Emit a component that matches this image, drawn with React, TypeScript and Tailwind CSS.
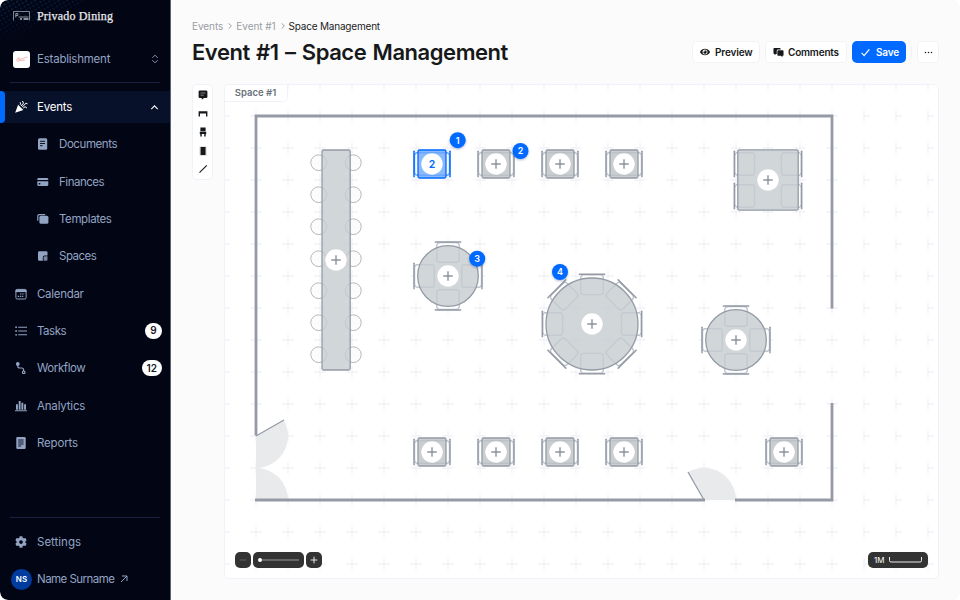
import React from 'react';
import { MdCelebration } from 'react-icons/md';
import { FaCog, FaEye } from 'react-icons/fa';

interface IconProps {
  children: React.ReactNode;
  className?: string;
}

// 12x12 drawing area shared by all the small glyphs
const Icon: React.FC<IconProps> = ({ children, className = 'size-3' }) => (
  <svg viewBox="0 0 12 12" className={`shrink-0 ${className}`} fill="currentColor">
    {children}
  </svg>
);

const DocumentIcon = () => (
  <Icon>
    <rect x="1" y="0.3" width="9.2" height="11.4" rx="1.5" />
    <path d="M3 3.3h5M3 5.5h5M3 7.7h2.6" stroke="#020514" strokeWidth="0.9" />
  </Icon>
);

const CardIcon = () => (
  <Icon>
    <path d="M1.6 2h8.4a1.3 1.3 0 0 1 1.3 1.3v.6H.3v-.6A1.3 1.3 0 0 1 1.6 2z" />
    <path d="M.3 5.2h11v3.5A1.3 1.3 0 0 1 10 10H1.6A1.3 1.3 0 0 1 .3 8.7z" />
    <rect x="1.7" y="7" width="1.6" height="1.5" fill="#020514" />
  </Icon>
);

const TemplatesIcon = () => (
  <Icon>
    <path d="M.8 7.8V3a1.4 1.4 0 0 1 1.4-1.4h6" fill="none" stroke="currentColor" strokeWidth="1.2" />
    <rect x="2.4" y="2.8" width="9" height="7.9" rx="1.5" />
  </Icon>
);

const SpacesIcon = () => (
  <Icon>
    <path d="M2.3 1.3h7a1.2 1.2 0 0 1 1.2 1.2v3H7.6A1.8 1.8 0 0 0 5.8 7.3v3.5H2.3a1.3 1.3 0 0 1-1.3-1.3V2.6a1.3 1.3 0 0 1 1.3-1.3z" />
    <path d="M6.6 10.7V7.3a1 1 0 0 1 1-1h2.9v3.2a1.2 1.2 0 0 1-1.2 1.2z" opacity="0.8" />
  </Icon>
);

const CalendarIcon = () => (
  <Icon>
    <rect x="0.9" y="1.4" width="10.2" height="9.6" rx="1.3" fill="none" stroke="currentColor" strokeWidth="1" />
    <path d="M.6 1.7h10.8v2.4H.6z" />
    <path d="M5 6h4.6M2.7 8.3h5.6" stroke="currentColor" strokeWidth="1.2" strokeDasharray="1.4 .8" />
  </Icon>
);

const TasksIcon = () => (
  <Icon>
    <path d="M3.2 2.2h8.8M3.2 6h8.8M3.2 9.8h8.8" stroke="currentColor" strokeWidth="1.1" />
    <circle cx="1.1" cy="2.2" r="0.9" />
    <circle cx="1.1" cy="6" r="0.9" />
    <circle cx="1.1" cy="9.8" r="0.9" />
  </Icon>
);

const WorkflowIcon = () => (
  <Icon>
    <circle cx="2.8" cy="1.9" r="1.9" />
    <path d="M2.8 3v1.2a1.8 1.8 0 0 0 1.8 1.8h2a2 2 0 0 1 2 2v1" fill="none" stroke="currentColor" strokeWidth="1.2" />
    <circle cx="8.7" cy="10.3" r="1.3" fill="none" stroke="currentColor" strokeWidth="1.2" />
  </Icon>
);

const AnalyticsIcon = () => (
  <Icon>
    <path d="M1 4.3h1.9v5.5H1zM3.7 1h1.9v8.8H3.7zM6.4 2.8h1.9v7H6.4zM9.1 4.3H11v5.5H9.1zM0 10.3h12v1H0z" />
  </Icon>
);

const ReportsIcon = () => (
  <Icon>
    <rect x="1.3" y="0" width="9.4" height="12" rx="1.3" />
    <path d="M3.2 3h5.4M3.2 5h5.4M3.2 7h5.4M3.2 9h3" stroke="#020514" strokeWidth="0.9" />
  </Icon>
);

interface NavItem {
  label: string;
  icon: React.ReactNode;
  labelClass: string;
  nested?: boolean;
  badge?: string;
}

const navItems: NavItem[] = [
  { label: 'Documents', icon: <DocumentIcon />, labelClass: 'tracking-[-0.42px]', nested: true },
  { label: 'Finances', icon: <CardIcon />, labelClass: 'tracking-[-0.47px]', nested: true },
  { label: 'Templates', icon: <TemplatesIcon />, labelClass: 'tracking-[-0.4px]', nested: true },
  { label: 'Spaces', icon: <SpacesIcon />, labelClass: 'tracking-[-0.5px]', nested: true },
  { label: 'Calendar', icon: <CalendarIcon />, labelClass: 'tracking-[-0.3px]' },
  { label: 'Tasks', icon: <TasksIcon />, labelClass: 'tracking-[-0.48px]', badge: '9' },
  { label: 'Workflow', icon: <WorkflowIcon />, labelClass: 'tracking-[-0.41px]', badge: '12' },
  { label: 'Analytics', icon: <AnalyticsIcon />, labelClass: 'tracking-[-0.18px]' },
  { label: 'Reports', icon: <ReportsIcon />, labelClass: 'tracking-[-0.16px]' },
];

const NavRow: React.FC<{ item: NavItem }> = ({ item }) => (
  <div className={`flex h-8 items-center pr-2 ${item.nested ? 'pl-[37px]' : 'pl-[15px]'}`}>
    {item.icon}
    <span className={`ml-[10px] flex-1 pt-px ${item.labelClass}`}>{item.label}</span>
    {item.badge && (
      <span className="flex h-4 min-w-[17px] items-center justify-center rounded-full bg-white px-[5px] text-[10px] font-semibold text-[#15171f]">
        {item.badge}
      </span>
    )}
  </div>
);

const Sidebar = () => (
  <aside className="relative flex h-full w-[171px] shrink-0 flex-col overflow-hidden rounded-l-lg border-r border-[#5d6270] bg-[#020514] text-[11.5px] text-[#93a4c3]">
    <svg className="absolute top-0 left-0 h-12 w-24" viewBox="0 0 96 48">
      <defs>
        <pattern id="dots" width="4" height="4" patternUnits="userSpaceOnUse" patternTransform="rotate(-30)">
          <circle cx="2" cy="2" r="0.8" fill="#0b63a8" />
        </pattern>
        <linearGradient id="fade" x1="0" y1="0" x2="0.5" y2="1">
          <stop offset="0" stopColor="#fff" stopOpacity="0.8" />
          <stop offset="0.8" stopColor="#fff" stopOpacity="0" />
        </linearGradient>
        <mask id="dotMask">
          <path d="M0 0h86L0 46z" fill="url(#fade)" />
        </mask>
      </defs>
      <rect width="96" height="48" fill="url(#dots)" mask="url(#dotMask)" />
    </svg>
    <div className="relative flex h-8 items-center pl-[13px]">
      <svg viewBox="0 0 17 10" className="h-[10px] w-[17px] fill-none stroke-[#b5b8bf]">
        <path d="M.5 9.5V.5h16v9" strokeWidth="0.7" />
        <path d="M2.8 2.5v4M2.8 2.5h2v2h-2M5.5 6h10" strokeWidth="0.8" />
        <path d="M7 8h2M10.5 8h5" strokeWidth="1.3" />
      </svg>
      <span className="ml-[7px] font-['Liberation_Serif',serif] text-[12px] tracking-[0.18px] text-[#e9eaee] [-webkit-text-stroke:0.25px_#e9eaee]">
        Privado Dining
      </span>
    </div>
    <div className="mt-[11px] flex h-8 items-center pr-[10px] pl-[13px]">
      <span className="flex size-[17px] items-center justify-center rounded-[3px] bg-white">
        <svg viewBox="0 0 14 8" className="h-2 w-[14px] fill-none stroke-[#ef8d8d]" strokeWidth="0.6">
          <path d="M1 5.5c2-1 2-3 3-3s-1 3 0 2.5 1-1 2-1 1 0 2-.5 2-1 4.500-1.500M2 6.500c3-1 5-1.300 8-1.500" />
        </svg>
      </span>
      <span className="ml-[7px] flex-1 pt-px tracking-[-0.22px]">Establishment</span>
      <Icon className="size-[10px]">
        <path d="M2.800 4.600 6 1.400l3.200 3.200M2.800 7.400 6 10.600l3.200-3.200" fill="none" stroke="currentColor" strokeWidth="1.100" />
      </Icon>
    </div>
    <div className="mx-[10px] mt-[7px] h-px bg-[#1a2140]" />
    <nav className="mt-2 flex flex-col gap-[5.33px]">
      <div className="flex h-8 items-center bg-[#071129] pr-[10px] text-white">
        <span className="h-8 w-[5px] rounded-r-[4px] bg-[#0069ff]" />
        <MdCelebration className="ml-[9px] size-[14px]" />
        <span className="ml-[9px] flex-1 pt-px tracking-[-0.23px]">Events</span>
        <Icon className="size-[11px]">
          <path d="M2.500 7.700 6 4.200l3.500 3.500" fill="none" stroke="currentColor" strokeWidth="1.200" />
        </Icon>
      </div>
      {navItems.map((item) => (
        <NavRow key={item.label} item={item} />
      ))}
    </nav>
    <div className="mx-[10px] mt-auto h-px bg-[#1a2140]" />
    <div className="mt-2 flex h-8 items-center pl-[15px]">
      <FaCog className="size-3" />
      <span className="ml-[10px] pt-px">Settings</span>
    </div>
    <div className="mt-[5px] mb-[5px] flex h-8 items-center pl-[11px]">
      <span className="flex size-[21px] items-center justify-center rounded-full bg-[#003c9e] text-[8px] font-semibold text-white">NS</span>
      <span className="ml-[5px] pt-px tracking-[-0.53px]">Name Surname</span>
      <Icon className="ml-[3px] size-3">
        <path d="M3 9 9 3M4 3h5v5" fill="none" stroke="currentColor" strokeWidth="1" />
      </Icon>
    </div>
  </aside>
);

const Crumb = () => (
  <Icon className="mr-[2px] ml-[3px] size-2 text-[#8d929b]">
    <path d="M4 2l4 4-4 4" fill="none" stroke="currentColor" strokeWidth="1.3" />
  </Icon>
);

const Header = () => (
  <header className="flex justify-between">
    <div>
      <div className="flex h-3 items-center text-[10px] text-[#999da5]">
        <span className="tracking-[-0.05px]">Events</span>
        <Crumb />
        <span className="tracking-[-0.05px]">Event #1</span>
        <Crumb />
        <span className="tracking-[-0.2px] text-[#1b1c1f]">Space Management</span>
      </div>
      <h1 className="mt-[6px] mb-px text-[22px] leading-7 font-semibold tracking-[-0.45px] [word-spacing:1.2px] whitespace-nowrap text-[#17181a]">
        Event #1 – Space Management
      </h1>
    </div>
    <div className="mt-[21px] flex h-[22px] text-[10px] font-semibold text-[#17181a]">
      <button className="flex w-[68px] items-center rounded-[5px] border border-[#f1f2f6] bg-white pl-[7px]">
        <FaEye className="size-[10px]" />
        <span className="ml-[5px] tracking-[-0.15px]">Preview</span>
      </button>
      <button className="ml-[5px] flex w-[82px] items-center rounded-[5px] border border-[#f1f2f6] bg-white pl-[7px]">
        <Icon className="size-[11px]">
          <path d="M1.500 1h5.800a1 1 0 0 1 1 1v.8H5.500a1.400 1.400 0 0 0-1.400 1.400v3.300H3.200L1.800 9V7.500h-.3a1 1 0 0 1-1-1V2a1 1 0 0 1 1-1z" />
          <path d="M5.800 3.600h4.700a1 1 0 0 1 1 1v4a1 1 0 0 1-1 1h-.3v1.600L8.700 9.600H5.800a1 1 0 0 1-1-1v-4a1 1 0 0 1 1-1z" />
        </Icon>
        <span className="ml-1 tracking-[-0.2px]">Comments</span>
      </button>
      <button className="ml-[5px] flex w-[54px] items-center rounded-[5px] bg-[#0069ff] pl-2 text-white">
        <Icon className="size-[11px]">
          <path d="M1.800 6.500 4.500 9.500 10.200 2.500" fill="none" stroke="currentColor" strokeWidth="1.300" />
        </Icon>
        <span className="ml-[5px] tracking-[-0.15px]">Save</span>
      </button>
      <span className="mx-[5px] my-[5px] w-px bg-[#f1f2f6]" />
      <button className="flex w-[22px] items-center justify-center rounded-[5px] border border-[#f1f2f6] bg-white">
        <Icon className="size-[9px]">
          <circle cx="2" cy="6" r="1" />
          <circle cx="6" cy="6" r="1" />
          <circle cx="10" cy="6" r="1" />
        </Icon>
      </button>
    </div>
  </header>
);

const Toolbar = () => (
  <div className="flex h-[96px] w-[21px] flex-col items-center justify-between rounded-[5px] border border-[#f1f2f9] bg-white py-[4px] text-[#17181a]">
    <Icon>
      <path d="M2.800 1.600h6.400A1.200 1.200 0 0 1 10.400 2.800v5a1.200 1.200 0 0 1-1.200 1.200H7L4.800 10.800V9h-2A1.200 1.200 0 0 1 1.600 7.800v-5a1.200 1.200 0 0 1 1.200-1.200z" />
      <path d="M3.500 4h5M3.500 6.200h3.300" stroke="#aaa" strokeWidth="0.700" />
    </Icon>
    <Icon>
      <path d="M1.600 3.300h8.800v5.300H9V5.600H3v3H1.600z" />
    </Icon>
    <Icon>
      <path d="M3.400 1.500h5.200v3.800H3.400zM2.800 5.800h6.400v2.200H2.800zM3.300 8h1.500v2.500H3.300zM7.200 8h1.500v2.500H7.200z" />
    </Icon>
    <Icon>
      <path d="M2.800 1.800h6.400v8.400H2.800z" opacity="0.500" />
      <path d="M4 2h4.200v8H4z" />
    </Icon>
    <Icon>
      <path d="M2.500 9.700 9.800 2.300" stroke="currentColor" strokeWidth="1.100" />
    </Icon>
  </div>
);

const GREY = '#949ba6';
const BLUE = '#0069ff';

// Grid marks every 32 units, the last three columns have no left arm
const gridPath = Array.from({ length: 23 }, (_, col) => 224 + col * 32)
  .flatMap((x) =>
    Array.from({ length: 16 }, (_, row) => 84 + row * 32).map(
      (y) => `M${x >= 864 ? x : x - 5.5} ${y}H${x + 5.5}M${x} ${y - 5.5}V${y + 5.5}`
    )
  )
  .join('');

interface ChairProps {
  cx: number;
  cy: number;
  distance: number;
  angle: number;
  color?: string;
}

const Chair: React.FC<ChairProps> = ({ cx, cy, distance, angle, color = GREY }) => (
  <g transform={`translate(${cx} ${cy}) rotate(${angle}) translate(${-distance} 0)`} fill="none" stroke={color}>
    <rect x="0.5" y="-11.2" width="19.8" height="22.4" rx="3" fill="#fff" strokeWidth="1.400" strokeOpacity="0.600" />
    <path d="M0 -12.700V12.700" strokeWidth="1.500" strokeLinecap="round" />
  </g>
);

const Plus: React.FC<{ cx: number; cy: number }> = ({ cx, cy }) => (
  <g>
    <circle cx={cx} cy={cy} r="10.7" fill="#fff" />
    <path d={`M${cx - 4.7} ${cy}h9.4M${cx} ${cy - 4.7}v9.4`} stroke="#8c939f" strokeWidth="1.4" />
  </g>
);

const SmallTable: React.FC<{ cx: number; cy: number; seats?: number }> = ({ cx, cy, seats }) => {
  const color = seats ? BLUE : GREY;
  return (
    <g>
      <Chair cx={cx} cy={cy} distance={18} angle={0} color={color} />
      <Chair cx={cx} cy={cy} distance={18} angle={180} color={color} />
      <rect x={cx - 14} y={cy - 14} width="28" height="28" rx="1.5" fill={seats ? '#6ea8ff' : '#bdc2c6'} fillOpacity="0.8" stroke={color} strokeWidth="1.3" />
      {seats ? (
        <>
          <circle cx={cx} cy={cy} r="10.7" fill="#fff" />
          <text x={cx} y={cy + 3.7} textAnchor="middle" fontSize="10.5" fontWeight="600" fill={BLUE}>
            {seats}
          </text>
        </>
      ) : (
        <Plus cx={cx} cy={cy} />
      )}
    </g>
  );
};

const RoundTable: React.FC<{ cx: number; cy: number; r: number; seats: number }> = ({ cx, cy, r, seats }) => (
  <g>
    {Array.from({ length: seats }, (_, i) => (
      <Chair key={i} cx={cx} cy={cy} distance={r + 3.7} angle={(360 / seats) * i} />
    ))}
    <circle cx={cx} cy={cy} r={r} fill="#c6cccf" fillOpacity="0.8" stroke={GREY} strokeWidth="1.3" />
    <Plus cx={cx} cy={cy} />
  </g>
);

const comments = [
  { id: 1, x: 457.7, y: 140.2 },
  { id: 2, x: 520.5, y: 151 },
  { id: 3, x: 477.2, y: 258.7 },
  { id: 4, x: 560, y: 272 },
];

const FloorPlan = () => (
  <svg viewBox="225 85 713 493" className="h-[493px] w-[713px]">
    <defs>
      <filter id="shadow" x="-50%" y="-50%" width="200%" height="200%">
        <feDropShadow dx="0" dy="1" stdDeviation="1" floodColor="#0a2a66" floodOpacity="0.35" />
      </filter>
    </defs>
    <path d={gridPath} stroke="#f1f2f8" strokeWidth="1.3" fill="none" />

    <g fill="#e8eaec">
      <path d="M256 436L283.700 420A32 32 0 0 1 256 468z" />
      <path d="M256 500V468A32 32 0 0 1 288 500z" />
      <path d="M704 500L688 472.300A32 32 0 0 1 736 500z" />
    </g>
    <g fill="none" stroke={GREY}>
      <path d="M256 435.500V116H832V308.500M832 403V500H735M705 500H255" strokeWidth="2.800" />
      <path d="M256 436L284 420M704 500L688 472" strokeWidth="1.300" />
    </g>

    {Array.from({ length: 7 }, (_, i) => 162.7 + i * 32).map((y) => (
      <g key={y} fill="#fcfcfc" stroke="#a9aeb6" strokeWidth="0.9">
        <circle cx="318.700" cy={y} r="7.900" />
        <circle cx="353.300" cy={y} r="7.900" />
      </g>
    ))}
    <rect x="322" y="150" width="28.2" height="220" rx="1.5" fill="#c6cccf" fillOpacity="0.8" stroke={GREY} strokeWidth="1.3" />
    <Plus cx={336} cy={260} />

    {[432, 496, 560, 624].map((x) => (
      <SmallTable key={x} cx={x} cy={164} seats={x === 432 ? 2 : undefined} />
    ))}
    {[432, 496, 560, 624, 784].map((x) => (
      <SmallTable key={x} cx={x} cy={452} />
    ))}

    {[164, 196].map((y) => (
      <g key={y}>
        <Chair cx={768} cy={y} distance={33.7} angle={0} />
        <Chair cx={768} cy={y} distance={33.7} angle={180} />
      </g>
    ))}
    <rect x="737.8" y="149.8" width="60.4" height="60.4" rx="1.5" fill="#c6cccf" fillOpacity="0.8" stroke={GREY} strokeWidth="1.3" />
    <Plus cx={768} cy={180} />

    <RoundTable cx={448} cy={276} r={30.3} seats={4} />
    <RoundTable cx={736} cy={340} r={30.3} seats={4} />
    <RoundTable cx={592} cy={324} r={46} seats={8} />

    {comments.map((c) => (
      <g key={c.id}>
        <circle cx={c.x} cy={c.y} r="8" fill={BLUE} filter="url(#shadow)" />
        <text x={c.x} y={c.y + 3.3} textAnchor="middle" fontSize="9" fontWeight="600" fill="#fff">
          {c.id}
        </text>
      </g>
    ))}
  </svg>
);

const ZoomControls = () => (
  <div className="absolute bottom-[10px] left-[9.5px] flex gap-[2.5px] text-white">
    <button className="flex size-4 items-center justify-center rounded-[5px] bg-[#333]">
      <Icon className="size-2 text-[#666]">
        <path d="M1 6h10" stroke="currentColor" strokeWidth="1.3" />
      </Icon>
    </button>
    <div className="flex h-4 w-[50.5px] items-center rounded-[5px] bg-[#333] px-[5px]">
      <span className="size-1 rounded-full bg-white" />
      <span className="h-[1.5px] flex-1 bg-[#666]" />
    </div>
    <button className="flex size-4 items-center justify-center rounded-[5px] bg-[#333]">
      <Icon className="size-2">
        <path d="M1 6h10M6 1v10" stroke="currentColor" strokeWidth="1.3" />
      </Icon>
    </button>
  </div>
);

const App: React.FC = () => (
  <div className="h-[600px] w-[960px] bg-white">
    <div className="flex h-full overflow-hidden rounded-lg bg-[#fbfbfb] font-['Inter',sans-serif]">
      <Sidebar />
      <main className="flex-1 pt-5 pr-[21px] pl-[21px]">
        <Header />
        <div className="mt-[17px] flex justify-between">
          <Toolbar />
          <div className="relative h-[495px] w-[715px] overflow-hidden rounded-[5px] border border-[#f1f2f9] bg-white">
            <FloorPlan />
            <div className="absolute top-0 left-0 flex h-[17px] w-[63px] items-center justify-center rounded-br-[5px] border-r border-b border-[#f1f2f9] bg-white pr-px text-[9.5px] font-semibold text-[#6a707b]">
              Space #1
            </div>
            <ZoomControls />
            <div className="absolute right-[10px] bottom-[10px] flex h-4 w-[60px] items-center rounded-[5px] bg-[#333] pl-[6px] text-[8px] text-white">
              1M
              <svg viewBox="0 0 33 6" className="ml-[5px] h-[6px] w-[33px] fill-none stroke-white">
                <path d="M.5 0v3.500a1.500 1.500 0 0 0 1.500 1.500h29a1.500 1.500 0 0 0 1.500-1.500V0" strokeWidth="0.900" />
              </svg>
            </div>
          </div>
        </div>
      </main>
    </div>
  </div>
);

export default App;
